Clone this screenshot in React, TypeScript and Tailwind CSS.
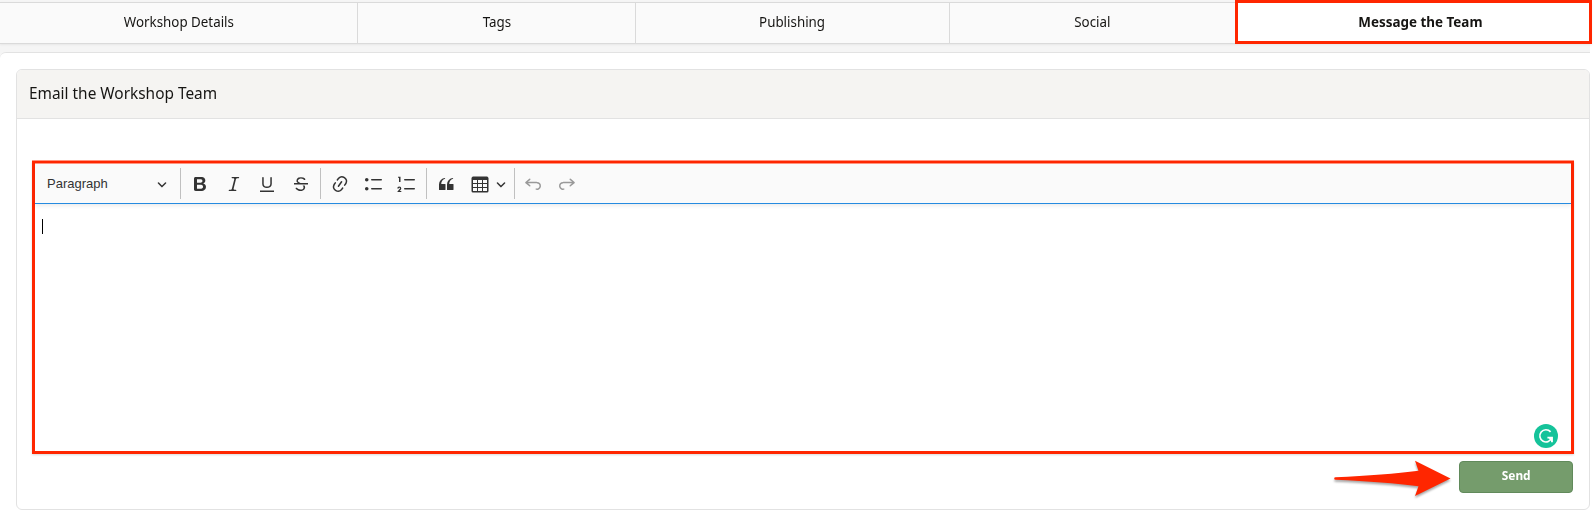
import type { ReactNode } from "react";

const ICONS = {
  bold: "M10.187 17H5.773c-.637 0-1.092-.138-1.364-.415-.273-.277-.409-.718-.409-1.323V4.738c0-.617.14-1.062.419-1.332.279-.27.73-.406 1.354-.406h4.68c.69 0 1.288.041 1.793.124.506.083.96.242 1.36.478.341.197.644.447.906.75a3.262 3.262 0 0 1 .808 2.162c0 1.401-.722 2.426-2.167 3.075C15.05 10.175 16 11.315 16 13.01a3.756 3.756 0 0 1-2.296 3.504 6.1 6.1 0 0 1-1.517.377c-.571.073-1.238.11-2 .11zm-.217-6.217H7v4.087h3.069c1.977 0 2.965-.69 2.965-2.072 0-.707-.256-1.22-.768-1.537-.512-.319-1.277-.478-2.296-.478zM7 5.13v3.619h2.606c.729 0 1.292-.067 1.69-.2a1.6 1.6 0 0 0 .91-.765c.165-.267.247-.566.247-.897 0-.707-.26-1.176-.778-1.409-.519-.232-1.31-.348-2.375-.348H7z",
  italic: "m9.586 14.633.021.004c-.036.335.095.655.393.962.082.083.173.15.274.201h1.474a.6.6 0 1 1 0 1.2H5.304a.6.6 0 0 1 0-1.2h1.15c.474-.07.809-.182 1.005-.334.157-.122.291-.32.404-.597l2.416-9.55a1.053 1.053 0 0 0-.281-.823 1.12 1.12 0 0 0-.442-.296H8.15a.6.6 0 0 1 0-1.2h6.443a.6.6 0 1 1 0 1.2h-1.195c-.376.056-.65.155-.823.296-.215.175-.423.439-.623.79l-2.366 9.347z",
  underline: "M3 18v-1.5h14V18zM5.2 10V3.6c0-.4.4-.6.8-.6.3 0 .7.2.7.6v6.2c0 2 1.3 2.8 3.2 2.8 1.9 0 3.4-.9 3.4-2.9V3.6c0-.3.4-.5.8-.5.3 0 .7.2.7.5V10c0 2.7-2.2 4-4.9 4-2.6 0-4.7-1.2-4.7-4z",
  strike: "M7 16.4c-.8-.4-1.5-.9-2.2-1.5a.6.6 0 0 1-.2-.5l.3-.6h1c1 1.2 2.1 1.7 3.7 1.7 1 0 1.8-.3 2.3-.6.6-.4.6-1.2.6-1.3.2-1.2-.9-2.1-.9-2.1h2.1c.3.7.4 1.2.4 1.7v.8l-.6 1.2c-.6.8-1.1 1-1.6 1.2a6 6 0 0 1-2.4.6c-1 0-1.8-.3-2.5-.6zM6.8 9 6 8.3c-.4-.5-.5-.8-.5-1.6 0-.7.1-1.3.5-1.8.4-.6 1-1 1.6-1.3a6.3 6.3 0 0 1 4.7 0 4 4 0 0 1 1.7 1l.3.7c0 .1.2.4-.2.7-.4.2-.9.1-1 0a3 3 0 0 0-1.2-1c-.4-.2-1-.3-2-.4-.7 0-1.4.2-2 .6-.8.6-1 .8-1 1.5 0 .8.5 1 1.2 1.5.6.4 1.1.7 1.9 1H6.8zM3 10.5V9h14v1.5z",
  link: "m11.077 15 .991-1.416a.75.75 0 1 1 1.229.86l-1.148 1.64a.748.748 0 0 1-.217.206 5.251 5.251 0 0 1-8.503-5.955.741.741 0 0 1 .12-.274l1.147-1.639a.75.75 0 1 1 1.228.86L4.933 10.7l.006.003a3.75 3.75 0 0 0 6.132 4.294l.006.004zm5.494-5.335a.748.748 0 0 1-.12.274l-1.147 1.639a.75.75 0 1 1-1.228-.86l.86-1.23a3.75 3.75 0 0 0-6.144-4.301l-.86 1.229a.75.75 0 0 1-1.229-.86l1.148-1.64a.748.748 0 0 1 .217-.206 5.251 5.251 0 0 1 8.503 5.955zm-4.563-2.532a.75.75 0 0 1 .184 1.045l-3.155 4.505a.75.75 0 1 1-1.229-.86l3.155-4.506a.75.75 0 0 1 1.045-.184z",
  bullets: "M7 5.75c0 .414.336.75.75.75h9.5a.75.75 0 1 0 0-1.5h-9.5a.75.75 0 0 0-.75.75zm-6 0C1 4.784 1.777 4 2.75 4c.966 0 1.75.777 1.75 1.75 0 .966-.777 1.75-1.75 1.75C1.784 7.5 1 6.723 1 5.75zm6 9c0 .414.336.75.75.75h9.5a.75.75 0 1 0 0-1.5h-9.5a.75.75 0 0 0-.75.75zm-6 0c0-.966.777-1.75 1.75-1.75.966 0 1.75.777 1.75 1.75 0 .966-.777 1.75-1.75 1.75-.966 0-1.75-.777-1.75-1.75z",
  numbers: "M7 5.75c0 .414.336.75.75.75h9.5a.75.75 0 1 0 0-1.5h-9.5a.75.75 0 0 0-.75.75zM3.5 3v5H2V3.7H1v-1h2.5V3zM.343 17.857l2.59-3.257H2.92a.6.6 0 1 0-1.04 0H.302a2 2 0 1 1 3.995 0h-.001c-.048.405-.16.734-.333.988-.175.254-.59.692-1.244 1.312H4.3v1h-4l.043-.043zM7 14.75a.75.75 0 0 1 .75-.75h9.5a.75.75 0 1 1 0 1.5h-9.5a.75.75 0 0 1-.75-.75z",
  quote: "M3 10.423a6.5 6.5 0 0 1 6.056-6.408l.038.67C6.448 5.423 5.354 7.663 5.22 10H9c.552 0 .5.432.5.986v4.511c0 .554-.448.503-1 .503h-5c-.552 0-.5-.449-.5-1.003v-4.574zm8 0a6.5 6.5 0 0 1 6.056-6.408l.038.67c-2.646.739-3.74 2.979-3.873 5.315H17c.552 0 .5.432.5.986v4.511c0 .554-.448.503-1 .503h-5c-.552 0-.5-.449-.5-1.003v-4.574z",
  table: "M3 6v3h4V6H3zm0 4v3h4v-3H3zm0 4v3h4v-3H3zm5 3h4v-3H8v3zm5 0h4v-3h-4v3zm4-4v-3h-4v3h4zm0-4V6h-4v3h4zm1.5 8a1.5 1.5 0 0 1-1.5 1.5H3A1.5 1.5 0 0 1 1.5 17V4c.222-.863 1.068-1.5 2-1.5h13c.932 0 1.778.637 2 1.5v13zM12 13v-3H8v3h4zm0-4V6H8v3h4z",
  undo: "m5.042 9.367 2.189 1.837a.75.75 0 0 1-.965 1.149l-3.788-3.18a.747.747 0 0 1-.21-.284.75.75 0 0 1 .17-.945L6.23 4.762a.75.75 0 1 1 .964 1.15L4.863 7.866h8.917A.75.75 0 0 1 14 7.9a4 4 0 1 1-1.477 7.718l.344-1.489a2.5 2.5 0 1 0 1.094-4.73l.008-.032H5.042z",
  redo: "m14.958 9.367-2.189 1.837a.75.75 0 0 0 .965 1.149l3.788-3.18a.747.747 0 0 0 .21-.284.75.75 0 0 0-.17-.945L13.77 4.762a.75.75 0 1 0-.964 1.15l2.331 1.955H6.22A.75.75 0 0 0 6 7.9a4 4 0 1 0 1.477 7.718l-.344-1.489A2.5 2.5 0 1 1 6.039 9.4l-.008-.032h8.927z",
};

function Tool({ name, muted = false }: { name: keyof typeof ICONS; muted?: boolean }) {
  return (
    <button aria-label={name} className={`flex w-[33.6px] shrink-0 justify-center ${muted ? "text-[#999999]" : "text-[#333333]"}`}>
      <svg viewBox="0 0 20 20" className="size-5" fill="currentColor">
        <path d={ICONS[name]} />
      </svg>
    </button>
  );
}

function Chevron() {
  return (
    <svg viewBox="0 0 10 10" className="size-[10px] shrink-0 text-[#333333]" fill="currentColor">
      <path d="M.941 4.523a.75.75 0 1 1 1.06-1.06l3.006 3.005 3.005-3.005a.75.75 0 1 1 1.06 1.06l-3.549 3.55a.75.75 0 0 1-1.168-.136L.941 4.523z" />
    </svg>
  );
}

function Group({ className, children }: { className: string; children: ReactNode }) {
  return <div className={`flex h-[31px] shrink-0 items-center border-r border-[#c0c0c0] ${className}`}>{children}</div>;
}

function Tab({ className, children }: { className: string; children: ReactNode }) {
  return (
    <button className={`flex items-center justify-center border-y border-r border-[#dadada] bg-[#fafafa] pb-[3px] text-[15px] text-[#161513] ${className}`}>
      <span className="inline-block scale-x-[0.89]">{children}</span>
    </button>
  );
}

export default function App() {
  return (
    <div className="h-[510px] w-[1593px] overflow-hidden bg-white font-['Noto_Sans',sans-serif] text-[#161513]">
      <div className="w-[1590px] bg-[#f5f5f5]">
        <nav className="flex h-[52px] pt-[2px]">
          <div className="flex h-[42px] shadow-[0_1px_2px_rgba(0,0,0,0.06)]">
            <Tab className="w-[358px]">Workshop Details</Tab>
            <Tab className="w-[278px]">Tags</Tab>
            <Tab className="w-[314px]">Publishing</Tab>
            <Tab className="w-[285px] border-r-0">Social</Tab>
            <button className="-mt-[2px] flex h-[44px] w-[357px] shrink-0 items-center justify-center border-[3px] border-[#ff2600] bg-white pb-px pl-[14px] text-[15px] font-bold">
              <span className="inline-block scale-x-[0.895]">Message the Team</span>
            </button>
          </div>
        </nav>
        <main className="h-[458px] rounded-tl-md border-t border-[#e2e2e2] bg-white pt-4 pl-4">
          <section className="h-[441px] w-[1574px] rounded-md border border-[#e2e2e2]">
            <h2 className="flex h-[49px] items-center rounded-t-[5px] border-b border-[#e2e2e2] bg-[#f5f4f2] pb-[2px] pl-3 text-[17px]">
              <span className="inline-block origin-left scale-x-[0.906]">Email the Workshop Team</span>
            </h2>
            <div className="pt-[42px] pl-[15px]">
              <div className="flex h-[293px] w-[1542px] flex-col border-[3px] border-t-2 border-[#ff2600] shadow-[0_-1px_0_#ff9480,0_1px_2px_rgba(0,0,0,0.15)]">
                <div className="flex h-[41px] shrink-0 items-center border-t border-b border-t-[#ff9480] border-b-[#258be0] bg-[#fafafa] shadow-[0_2px_4px_rgba(0,0,0,0.08)]">
                  <Group className="w-[146px] justify-between pr-[13px] pl-3">
                    <span className="font-['Liberation_Sans',Arial,sans-serif] text-[13px] text-[#333333]">Paragraph</span>
                    <Chevron />
                  </Group>
                  <Group className="w-[140px] pl-[2.2px]">
                    <Tool name="bold" />
                    <Tool name="italic" />
                    <Tool name="underline" />
                    <Tool name="strike" />
                  </Group>
                  <Group className="w-[106px] pl-[2.2px]">
                    <Tool name="link" />
                    <Tool name="bullets" />
                    <Tool name="numbers" />
                  </Group>
                  <Group className="w-[88px] pl-[2.2px]">
                    <Tool name="quote" />
                    <Tool name="table" />
                    <Chevron />
                  </Group>
                  <div className="flex pl-[1.4px]">
                    <Tool name="undo" muted />
                    <Tool name="redo" muted />
                  </div>
                </div>
                <div className="flex grow flex-col justify-between">
                  <div className="mt-[15px] ml-[7px] h-[15px] w-px bg-black" />
                  <svg viewBox="0 0 24 24" className="mr-[13px] mb-[3px] size-6 self-end">
                    <circle cx="12" cy="12" r="12" fill="#15c39a" />
                    <path d="M16.6 7.9A6.1 6.1 0 1 0 17.8 13.6H13.4M17.9 13.6V18.3" fill="none" stroke="white" strokeWidth="1.7" />
                    <path d="M13.8 13.1h4.9v5.2l-1.7-1.5z" fill="white" />
                  </svg>
                </div>
              </div>
              <div className="flex w-[1541px] items-start justify-end pt-[6px]">
                <svg viewBox="0 0 120 40" className="mr-[7px] h-[40px] w-[120px] drop-shadow-[0_2px_1px_rgba(0,0,0,0.35)]">
                  <path d="M3.5 17.2 Q53 15 86.5 10.7L83 .8 118.5 18.5 83 36 86.5 26.3Q53 22 3.5 19.8A1.3 1.3 0 0 1 3.5 17.2Z" fill="#ff2600" />
                </svg>
                <button className="mt-px flex h-8 w-[114px] items-center justify-center rounded border border-[#618a5b] bg-[#759c6c] pb-px text-[12.5px] font-bold text-white">
                  <span className="inline-block scale-x-[0.95]">Send</span>
                </button>
              </div>
            </div>
          </section>
        </main>
      </div>
    </div>
  );
}
